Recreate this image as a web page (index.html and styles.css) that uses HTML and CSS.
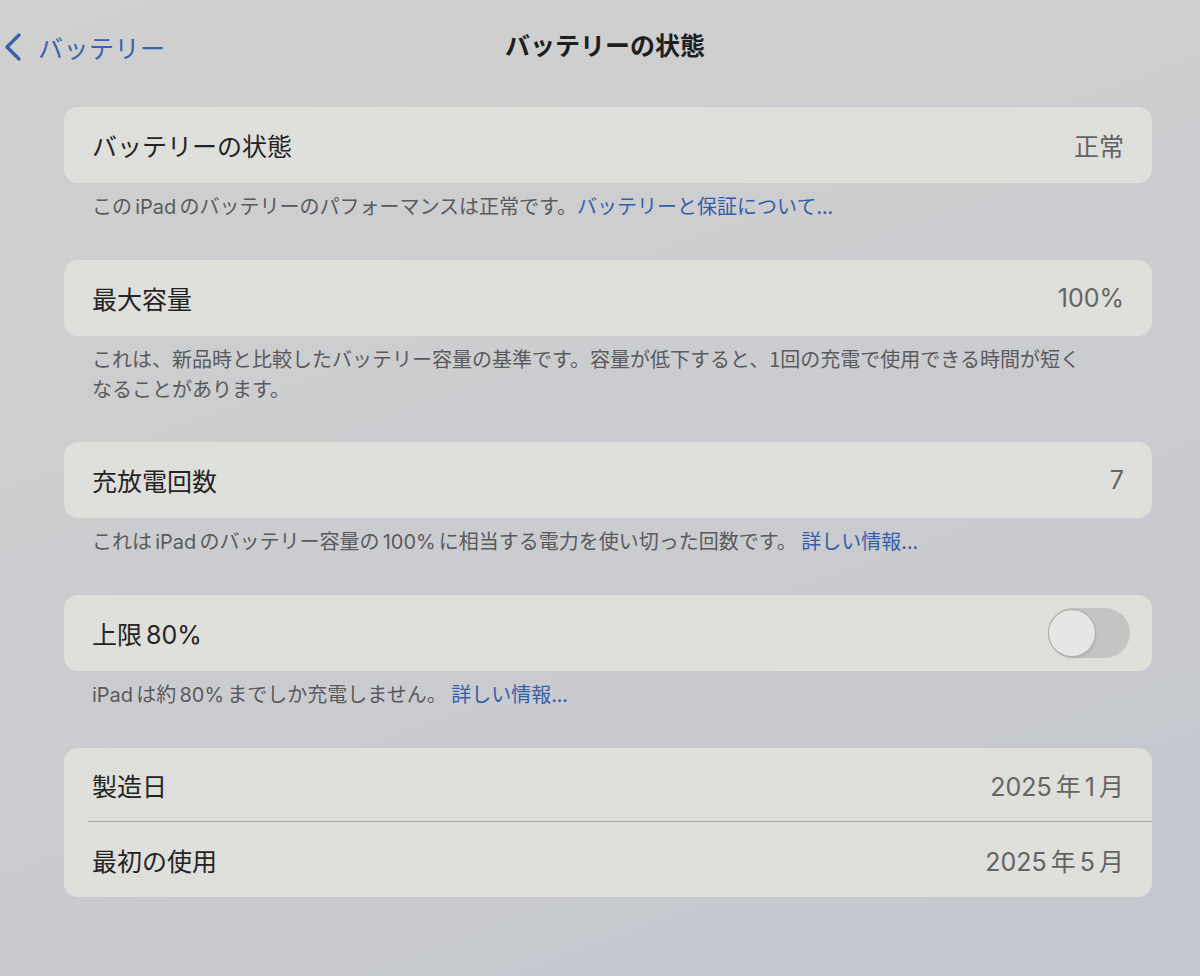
FILE: index.html
```html
<!DOCTYPE html>
<html lang="ja">
<head>
<meta name="viewport" content="width=device-width, initial-scale=1">
<title>バッテリーの状態</title>
<link rel="stylesheet" href="styles.css">
</head>
  <body>
    <div class="navbar">
      <a class="back" href="#">
        <svg class="chevron" width="20" height="30" viewBox="0 0 20 30">
          <path d="M16 3 L4 15 L16 27" fill="none" stroke="#3b62ad" stroke-width="3.4" stroke-linecap="round" stroke-linejoin="round"/>
        </svg>
        <span>バッテリー</span>
      </a>
      <div class="title">バッテリーの状態</div>
    </div>

    <div class="container">
      <div class="card">
        <div class="row">
          <span class="label">バッテリーの状態</span>
          <span class="value">正常</span>
        </div>
      </div>
      <div class="footer">この<span class="lat">iPad</span>のバッテリーのパフォーマンスは正常です。<a href="#">バッテリーと保証について...</a></div>

      <div class="card">
        <div class="row">
          <span class="label">最大容量</span>
          <span class="value num">100%</span>
        </div>
      </div>
      <div class="footer">これは、新品時と比較したバッテリー容量の基準です。容量が低下すると、1回の充電で使用できる時間が短くなることがあります。</div>

      <div class="card">
        <div class="row">
          <span class="label">充放電回数</span>
          <span class="value num">7</span>
        </div>
      </div>
      <div class="footer">これは<span class="lat">iPad</span>のバッテリー容量の<span class="lat">100%</span>に相当する電力を使い切った回数です。 <a href="#">詳しい情報...</a></div>

      <div class="card">
        <div class="row">
          <span class="label">上限<span class="lat">80%</span></span>
          <span class="switch"><span class="knob"></span></span>
        </div>
      </div>
      <div class="footer"><span class="lat first">iPad</span>は約<span class="lat">80%</span>までしか充電しません。 <a href="#">詳しい情報...</a></div>

      <div class="card">
        <div class="row">
          <span class="label">製造日</span>
          <span class="value"><span class="num yr">2025</span>年<span class="lat">1</span>月</span>
        </div>
        <div class="row divided">
          <span class="label">最初の使用</span>
          <span class="value"><span class="num yr">2025</span>年<span class="lat">5</span>月</span>
        </div>
      </div>
    </div>
  </body>
</html>
```

FILE: styles.css
```css
body {
  margin: 0;
  font-family: "Noto Sans CJK JP", "Noto Sans", sans-serif;
  background: linear-gradient(160deg, #d0d0cf 0%, #cbccd0 55%, #c4c7cf 100%);
  color: #242424;
  height: 976px;
  overflow: hidden;
}

a {
  color: #355ea9;
  text-decoration: none;
}

.navbar {
  position: relative;
  height: 88px;
  display: flex;
  align-items: center;
  justify-content: center;
}

.back {
  position: absolute;
  left: 3px;
  top: 29px;
  display: flex;
  align-items: center;
  gap: 15px;
  font-size: 25px;
  letter-spacing: 0.5px;
  color: #3b62ad;
}

.title {
  font-size: 25px;
  font-weight: bold;
  color: #1e1e1e;
  margin-left: 10px;
}

.container {
  padding: 19px 48px 0 64px;
}

.card {
  background: #dfdfdc;
  border-radius: 14px;
  overflow: hidden;
}

.row {
  height: 76px;
  display: flex;
  align-items: center;
  justify-content: space-between;
  padding: 0 28px;
}

.card .divided {
  border-top: 1.5px solid #a9a9a8;
  margin-left: 24px;
  padding-left: 4px;
}

.card .row + .row {
  height: 75px;
}

.card:last-child .row:first-child {
  height: 73px;
}

.label {
  font-size: 25px;
}

.value {
  font-size: 25px;
  color: #646464;
}

.lat, .num {
  font-family: Inter, "Noto Sans CJK JP", sans-serif;
}

.lat {
  margin: 0 0.16em;
}

.lat.first {
  margin-left: 0;
}

.yr {
  margin-right: 0.16em;
}

.footer {
  font-size: 20px;
  line-height: 30px;
  color: #5a5a5c;
  padding: 8px 60px 38px 28px;
}

.switch {
  width: 82px;
  height: 50px;
  border-radius: 25px;
  background: #c4c4c3;
  display: flex;
  align-items: center;
  margin-right: -6px;
}

.knob {
  width: 46px;
  height: 46px;
  border-radius: 50%;
  background: #e6e6e4;
  margin-left: 1px;
  box-shadow: 0 0 0 1.2px #b0b0ae, 1px 2px 3px rgba(0, 0, 0, 0.12);
}
```
